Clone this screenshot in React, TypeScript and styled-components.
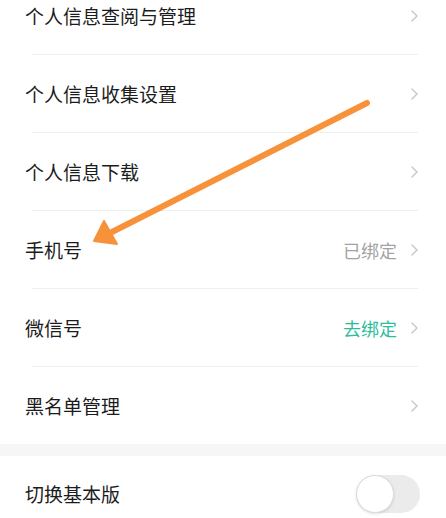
import React from "react";
import styled, { createGlobalStyle } from "styled-components";

const GlobalStyle = createGlobalStyle`
  html, body {
    margin: 0;
    padding: 0;
    background: #ffffff;
  }
  body {
    font-family: "Noto Sans CJK SC", "Noto Sans", sans-serif;
    -webkit-font-smoothing: antialiased;
  }
`;

const Page = styled.div`
  position: relative;
  width: 446px;
  height: 518px;
  overflow: hidden;
  background: #ffffff;
`;

const List = styled.div`
  display: flex;
  flex-direction: column;
  margin-top: -23px;
`;

const Row = styled.div<{ $height?: number }>`
  display: flex;
  align-items: center;
  justify-content: space-between;
  height: ${(p) => p.$height ?? 77}px;
  padding: 0 28px 0 25px;
`;

const Label = styled.span`
  font-size: 19px;
  color: #1c1c1c;
  letter-spacing: 0;
`;

const Right = styled.div`
  display: flex;
  align-items: center;
  gap: 14px;
`;

const Value = styled.span<{ $tone: "muted" | "accent" }>`
  font-size: 18px;
  color: ${(p) => (p.$tone === "accent" ? "#2ebd9c" : "#a3a3a3")};
`;

const Divider = styled.div`
  height: 1px;
  margin: 0 28px 0 32px;
  background: #efefef;
`;

const Band = styled.div`
  height: 12px;
  background: #f6f6f6;
`;

const SwitchTrack = styled.div`
  display: flex;
  align-items: center;
  width: 64px;
  height: 38px;
  border-radius: 19px;
  background: #ebebeb;
  margin-right: -2px;
`;

const SwitchKnob = styled.div`
  width: 36px;
  height: 36px;
  border-radius: 50%;
  background: #ffffff;
  border: 1px solid #dcdcdc;
  box-shadow: 0 1px 3px rgba(0, 0, 0, 0.12);
`;

const Overlay = styled.svg`
  position: absolute;
  top: 0;
  left: 0;
  pointer-events: none;
`;

const Chevron = () => (
  <svg width="7" height="12" viewBox="0 0 7 12">
    <polyline
      points="1,1 6,6 1,11"
      fill="none"
      stroke="#c6c6c6"
      strokeWidth="1.4"
      strokeLinecap="round"
      strokeLinejoin="round"
    />
  </svg>
);

type Item = {
  label: string;
  value?: string;
  tone?: "muted" | "accent";
};

const items: Item[] = [
  { label: "个人信息查阅与管理" },
  { label: "个人信息收集设置" },
  { label: "个人信息下载" },
  { label: "手机号", value: "已绑定", tone: "muted" },
  { label: "微信号", value: "去绑定", tone: "accent" },
  { label: "黑名单管理" },
];

export default function App() {
  return (
    <Page>
      <GlobalStyle />
      <List>
        {items.map((it, i) => (
          <React.Fragment key={it.label}>
            <Row>
              <Label>{it.label}</Label>
              <Right>
                {it.value && <Value $tone={it.tone ?? "muted"}>{it.value}</Value>}
                <Chevron />
              </Right>
            </Row>
            {i < items.length - 1 && <Divider />}
          </React.Fragment>
        ))}
      </List>
      <Band />
      <Row $height={75}>
        <Label>切换基本版</Label>
        <SwitchTrack>
          <SwitchKnob />
        </SwitchTrack>
      </Row>
      <Overlay width="446" height="518" viewBox="0 0 446 518">
        <line
          x1="367"
          y1="103"
          x2="110"
          y2="233"
          stroke="#f7923a"
          strokeWidth="6"
          strokeLinecap="round"
        />
        <polygon points="94,241 104,221 117,244" fill="#f7923a" stroke="#f7923a" strokeWidth="2" strokeLinejoin="round" />
      </Overlay>
    </Page>
  );
}
